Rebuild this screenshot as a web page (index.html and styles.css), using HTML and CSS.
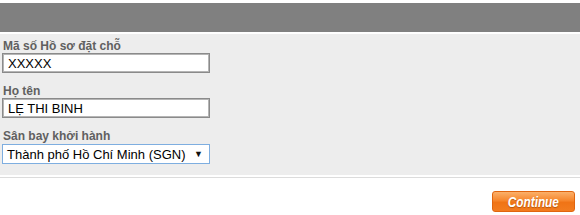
FILE: index.html
```html
<!DOCTYPE html>
<html lang="vi">
<head>
<meta charset="utf-8">
<title>Tra cứu đặt chỗ</title>
<link rel="stylesheet" href="styles.css">
</head>
<body>
<div class="topbar"></div>
<form class="panel">
  <label class="label" for="pnr">Mã số Hồ sơ đặt chỗ</label>
  <input class="field" id="pnr" type="text" value="XXXXX">
  <label class="label" for="name">Họ tên</label>
  <input class="field" id="name" type="text" value="LẸ THI BINH">
  <label class="label" for="dep">Sân bay khởi hành</label>
  <div class="select" id="dep">
    <span class="select-text">Thành phố Hồ Chí Minh (SGN)</span>
    <span class="select-arrow">▼</span>
  </div>
</form>
<div class="divider"></div>
<div class="actions">
  <button class="btn" type="button"><span class="btn-text">Continue</span></button>
</div>
</body>
</html>
```
FILE: styles.css
```css
html, body {
  margin: 0;
  padding: 0;
  background: #ffffff;
  font-family: "Liberation Sans", Arial, sans-serif;
}

.topbar {
  margin-top: 3px;
  height: 29px;
  background: #808080;
}

.panel {
  margin: 2px 0 0;
  height: 141px;
  box-sizing: border-box;
  padding: 6px 0 0 2px;
  background: #ededed;
  display: flex;
  flex-direction: column;
  align-items: flex-start;
}

.label {
  font-size: 12px;
  line-height: 13px;
  font-weight: bold;
  color: #606060;
  padding-left: 1px;
}

.field {
  width: 208px;
  height: 20px;
  box-sizing: border-box;
  margin: 0 0 12px;
  padding: 0 5px;
  border: 1px solid #8a8a8a;
  box-shadow: inset 0 0 0 1px #b5b5b5;
  background: #ffffff;
  font-family: "Liberation Sans", Arial, sans-serif;
  font-size: 13px;
  color: #000;
  outline: none;
}

.select {
  width: 208px;
  height: 20px;
  box-sizing: border-box;
  margin-top: 1px;
  border: 1px solid #7eaee0;
  background: #ffffff;
  display: flex;
  align-items: center;
  justify-content: space-between;
  padding: 0 6px 0 4px;
  font-size: 13px;
  color: #000;
  white-space: nowrap;
}

.select-text {
  flex: none;
}

.select-arrow {
  flex: none;
  font-size: 9px;
  color: #111;
}

.divider {
  margin-top: 2px;
  height: 1px;
  background: #dcdcdc;
}

.actions {
  display: flex;
  justify-content: flex-end;
  padding: 13px 5px 0 0;
}

.btn {
  width: 83px;
  height: 21px;
  box-sizing: border-box;
  padding: 0;
  border: 1px solid #e0650f;
  border-radius: 3px;
  background: linear-gradient(#fbb06a 0%, #f6862c 45%, #f07416 55%, #f27c1f 100%);
  color: #ffffff;
  font-family: "Liberation Sans", Arial, sans-serif;
  font-size: 14px;
  font-weight: bold;
  font-style: italic;
  text-shadow: 0 1px 1px rgba(140, 60, 0, 0.6);
  cursor: pointer;
}

.btn-text {
  display: inline-block;
  transform: scaleX(0.84);
}
```
